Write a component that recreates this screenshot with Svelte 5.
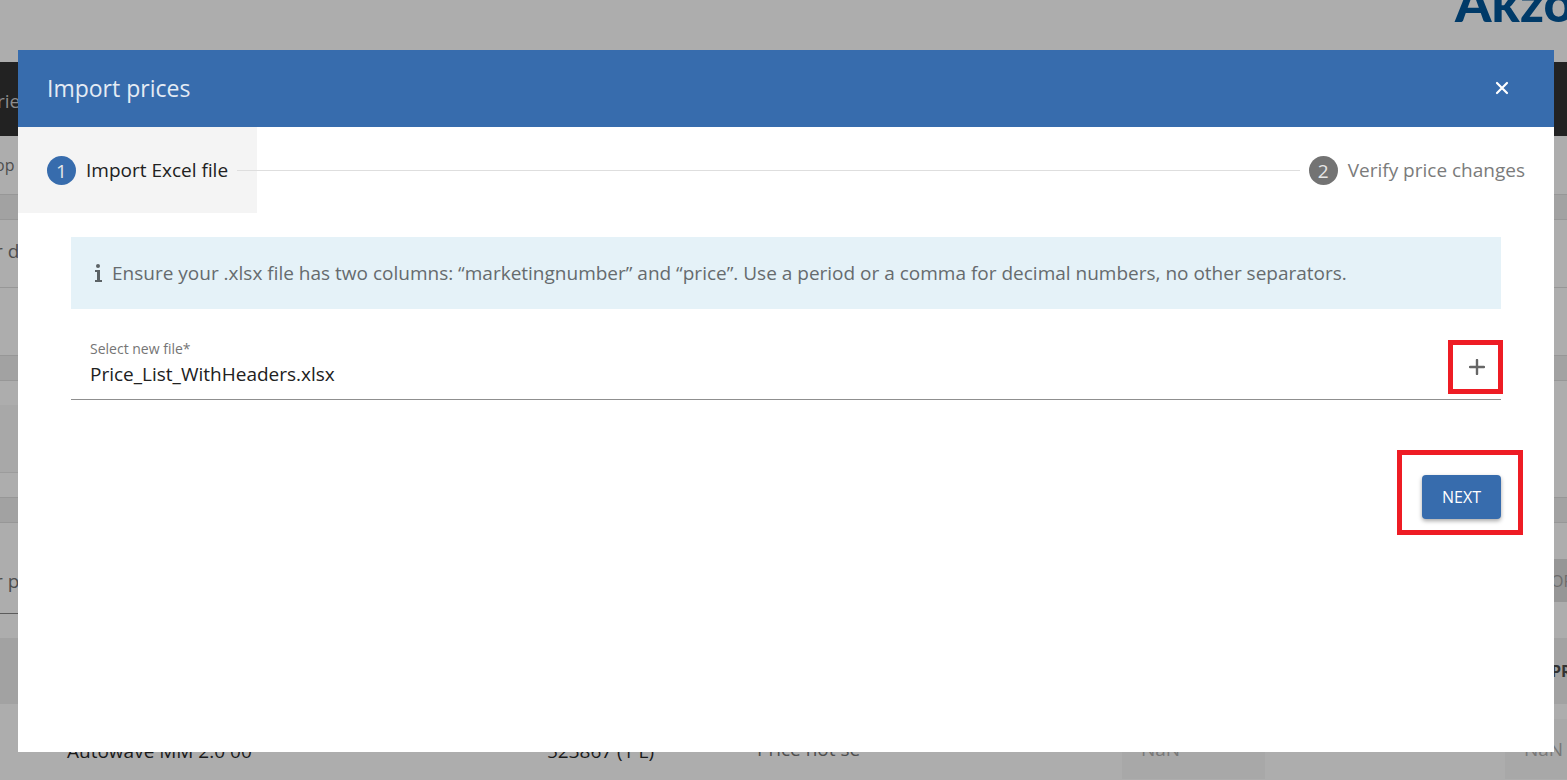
<script lang="ts">
  let open = $state(true);
  let step = $state(1);
  let fileName = $state("Price_List_WithHeaders.xlsx");
  let picker: HTMLInputElement;

  const rows = [
    {
      name: "Autowave MM 2.0 00",
      product: "523867 (1 L)",
      price: "Price not se",
      cost: "NaN",
      total: "NaN",
    },
  ];

  function fileSelected() {
    if (picker.files && picker.files.length > 0) {
      fileName = picker.files[0].name;
    }
  }
</script>

<div class="page" inert={open}>
  <header class="brand">AkzoNobel</header>
  <nav class="navbar"><a href="#prices">ries</a></nav>

  <div class="panel crumbs">op</div>
  <div class="gap"></div>
  <div class="panel row">r d</div>
  <div class="panel row"></div>
  <div class="gap"></div>
  <div class="panel notice"><div class="shade"></div></div>
  <div class="gap"></div>

  <div class="filters">
    <div class="search">r pr</div>
    <button class="export">OF</button>
  </div>

  <table>
    <colgroup>
      <col class="name" />
      <col class="product" />
      <col class="price" />
      <col class="cost" />
      <col class="spacer" />
      <col />
    </colgroup>
    <thead>
      <tr>
        <th></th>
        <th></th>
        <th></th>
        <th></th>
        <th></th>
        <th>PR</th>
      </tr>
    </thead>
    <tbody>
      {#each rows as row}
        <tr>
          <td class="first">{row.name}</td>
          <td>{row.product}</td>
          <td class="muted">{row.price}</td>
          <td class="boxed"><input aria-label="Cost" value={row.cost} readonly /></td>
          <td></td>
          <td class="boxed"><input aria-label="Total" value={row.total} readonly /></td>
        </tr>
      {/each}
    </tbody>
  </table>
</div>

{#if open}
  <div class="backdrop"></div>
  <div class="modal" role="dialog" aria-modal="true" aria-labelledby="modal-title">
    <div class="modal-header">
      <h2 id="modal-title">Import prices</h2>
      <button class="close" aria-label="Close" onclick={() => (open = false)}>
        <svg width="14" height="14" viewBox="0 0 14 14">
          <path d="M2 2L12 12M12 2L2 12" />
        </svg>
      </button>
    </div>

    <div class="stepper">
      <button class="step" class:active={step === 1} onclick={() => (step = 1)}>
        <span class="number">1</span>
        Import Excel file
      </button>
      <div class="line"></div>
      <button class="step" class:active={step === 2} onclick={() => (step = 2)}>
        <span class="number">2</span>
        Verify price changes
      </button>
    </div>

    <div class="content">
      <div class="info">
        <svg width="9" height="18" viewBox="0 0 9 18">
          <circle cx="4" cy="2" r="2" />
          <path d="M1 6h5v10h2v2H1v-2h2V8H1z" />
        </svg>
        <span>
          Ensure your .xlsx file has two columns: “marketingnumber” and “price”. Use a period or a
          comma for decimal numbers, no other separators.
        </span>
      </div>

      <div class="field">
        <div class="field-text">
          <label for="file-name">Select new file*</label>
          <input id="file-name" type="text" value={fileName} readonly />
        </div>
        <input
          class="picker"
          type="file"
          accept=".xlsx"
          aria-label="Excel file"
          bind:this={picker}
          onchange={fileSelected}
        />
        <button class="add highlight" aria-label="Choose file" onclick={() => picker.click()}>
          <svg width="16" height="16" viewBox="0 0 16 16">
            <path d="M8 1V15M1 8H15" />
          </svg>
        </button>
      </div>

      <div class="actions">
        <div class="next-wrap highlight">
          <button class="next" onclick={() => (step = 2)}>NEXT</button>
        </div>
      </div>
    </div>
  </div>
{/if}

<style>
  :global(body) {
    margin: 0;
    overflow: hidden;
    background: #fff;
    font-family: "Open Sans", "Noto Sans", sans-serif;
    font-size: 19px;
    color: #212121;
  }

  * {
    box-sizing: border-box;
  }

  button,
  input {
    font: inherit;
    border: 0;
    margin: 0;
  }

  button {
    cursor: pointer;
  }

  /* page behind the dialog */
  .page {
    height: 100vh;
    overflow: hidden;
    background: #adadad;
    color: #4e4e4e;
    font-size: 19px;
  }

  .brand {
    display: flex;
    justify-content: flex-end;
    align-items: flex-start;
    height: 62px;
    margin-right: -146px;
    font-family: Lato, "Open Sans", sans-serif;
    font-size: 52px;
    font-weight: 900;
    line-height: 4px;
    color: #003a68;
  }

  .navbar {
    display: flex;
    align-items: center;
    height: 74px;
    padding-top: 4px;
    background: #222;
  }

  .navbar a {
    margin-left: -3px;
    color: #8c8c8c;
    text-decoration: none;
  }

  .panel {
    display: flex;
    align-items: center;
    border-bottom: 1px solid #979797;
  }

  .crumbs {
    height: 59px;
    margin-left: -5px;
    font-size: 16px;
  }

  .row {
    height: 68px;
    margin-left: -5px;
    padding-bottom: 5px;
  }

  .gap {
    height: 25px;
    background: #a2a2a2;
    border-bottom: 1px solid #979797;
  }

  .notice {
    height: 117px;
  }

  .shade {
    width: 50%;
    height: 68px;
    background: #a8a8a8;
    border-bottom: 1px solid #9c9c9c;
  }

  .filters {
    display: flex;
    justify-content: space-between;
    align-items: flex-start;
    height: 115px;
  }

  .search {
    width: 30%;
    height: 91px;
    padding-top: 45px;
    margin-left: -5px;
    border-bottom: 1px solid #5c5c5c;
  }

  .export {
    width: 40px;
    height: 43px;
    margin-top: 36px;
    padding: 0 0 0 24px;
    background: #969696;
    color: #6c6c6c;
    font-size: 16px;
  }

  table {
    width: 100%;
    table-layout: fixed;
    border-collapse: collapse;
    color: #1a1a1a;
    font-size: 19px;
  }

  .name {
    width: 547px;
  }

  .product {
    width: 210px;
  }

  .price {
    width: 365px;
  }

  .cost {
    width: 143px;
  }

  .spacer {
    width: 240px;
  }

  th {
    height: 66px;
    padding: 0 0 0 46px;
    background: #a2a2a2;
    color: #333;
    font-size: 16px;
    text-align: left;
  }

  td {
    height: 76px;
    padding: 18px 0 0;
    border-bottom: 1px solid #a2a2a2;
  }

  td.first {
    padding-left: 67px;
  }

  td.muted {
    padding-top: 14px;
    color: #4e4e4e;
  }

  td.boxed {
    padding-top: 15px;
  }

  td input {
    display: block;
    width: 100%;
    height: 60px;
    padding: 0 0 0 19px;
    background: #a8a8a8;
    color: #777;
  }

  /* dialog */
  .backdrop {
    position: fixed;
    inset: 0;
  }

  .modal {
    position: absolute;
    top: 50px;
    left: 18px;
    right: 13px;
    min-height: 90vh;
    background: #fff;
  }

  .modal-header {
    display: flex;
    justify-content: space-between;
    align-items: center;
    height: 77px;
    padding: 0 39px 2px 29px;
    background: #376cad;
    color: #e4ebf4;
  }

  h2 {
    margin: 0;
    font-size: 23px;
    font-weight: 400;
    line-height: 30px;
  }

  .close {
    display: flex;
    padding: 6px;
    background: none;
  }

  svg {
    display: block;
  }

  .close path {
    fill: none;
    stroke: #fff;
    stroke-width: 2.2;
    stroke-linecap: round;
  }

  .stepper {
    display: flex;
    align-items: center;
  }

  .step {
    display: flex;
    align-items: center;
    gap: 10px;
    height: 86px;
    padding: 0 29px;
    background: none;
    color: #7b7b7b;
    white-space: nowrap;
  }

  .step.active {
    background: #f4f4f4;
    color: #212121;
  }

  .number {
    width: 29px;
    height: 29px;
    border-radius: 50%;
    background: #737373;
    color: #e6e6e6;
    line-height: 30px;
    text-align: center;
  }

  .active .number {
    background: #376cad;
  }

  .line {
    flex: 1;
    height: 1px;
    margin: 0 -20px;
    background: #dedede;
    z-index: 1;
  }

  .content {
    padding: 24px 53px;
  }

  .info {
    display: flex;
    align-items: center;
    gap: 9px;
    min-height: 72px;
    padding: 0 23px;
    background: #e5f2f8;
    color: #666b6e;
  }

  .info svg {
    flex: none;
    fill: #5c6366;
  }

  .field {
    display: flex;
    align-items: flex-start;
    justify-content: space-between;
    margin-top: 31px;
    height: 60px;
    border-bottom: 1px solid #8f8f8f;
  }

  .field-text {
    display: flex;
    flex: 1;
    flex-direction: column;
    padding-left: 19px;
  }

  label {
    font-size: 14px;
    line-height: 18px;
    color: #757575;
  }

  .field-text input {
    height: 32px;
    padding: 0;
    background: none;
    color: #212121;
    outline: none;
  }

  .picker {
    display: none;
  }

  .add {
    display: flex;
    align-items: center;
    justify-content: center;
    width: 48px;
    height: 54px;
    padding: 0;
    background: none;
  }

  .add path {
    fill: none;
    stroke: #666;
    stroke-width: 2.4;
    stroke-linecap: round;
  }

  .actions {
    display: flex;
    justify-content: flex-end;
    margin-top: 75px;
  }

  .next {
    display: block;
    height: 44px;
    padding: 0 20px;
    border-radius: 4px;
    background: #376cad;
    color: #fff;
    font-size: 16px;
    font-weight: 500;
    box-shadow: 0 2px 4px rgba(0, 0, 0, 0.35);
  }

  /* red call-out frames */
  .highlight {
    position: relative;
  }

  .highlight::after {
    content: "";
    position: absolute;
    border: 5px solid #ee1c24;
    pointer-events: none;
  }

  .add::after {
    inset: 0 -2px 0 -5px;
  }

  .next-wrap::after {
    inset: -25px -22px -16px -25px;
  }
</style>
